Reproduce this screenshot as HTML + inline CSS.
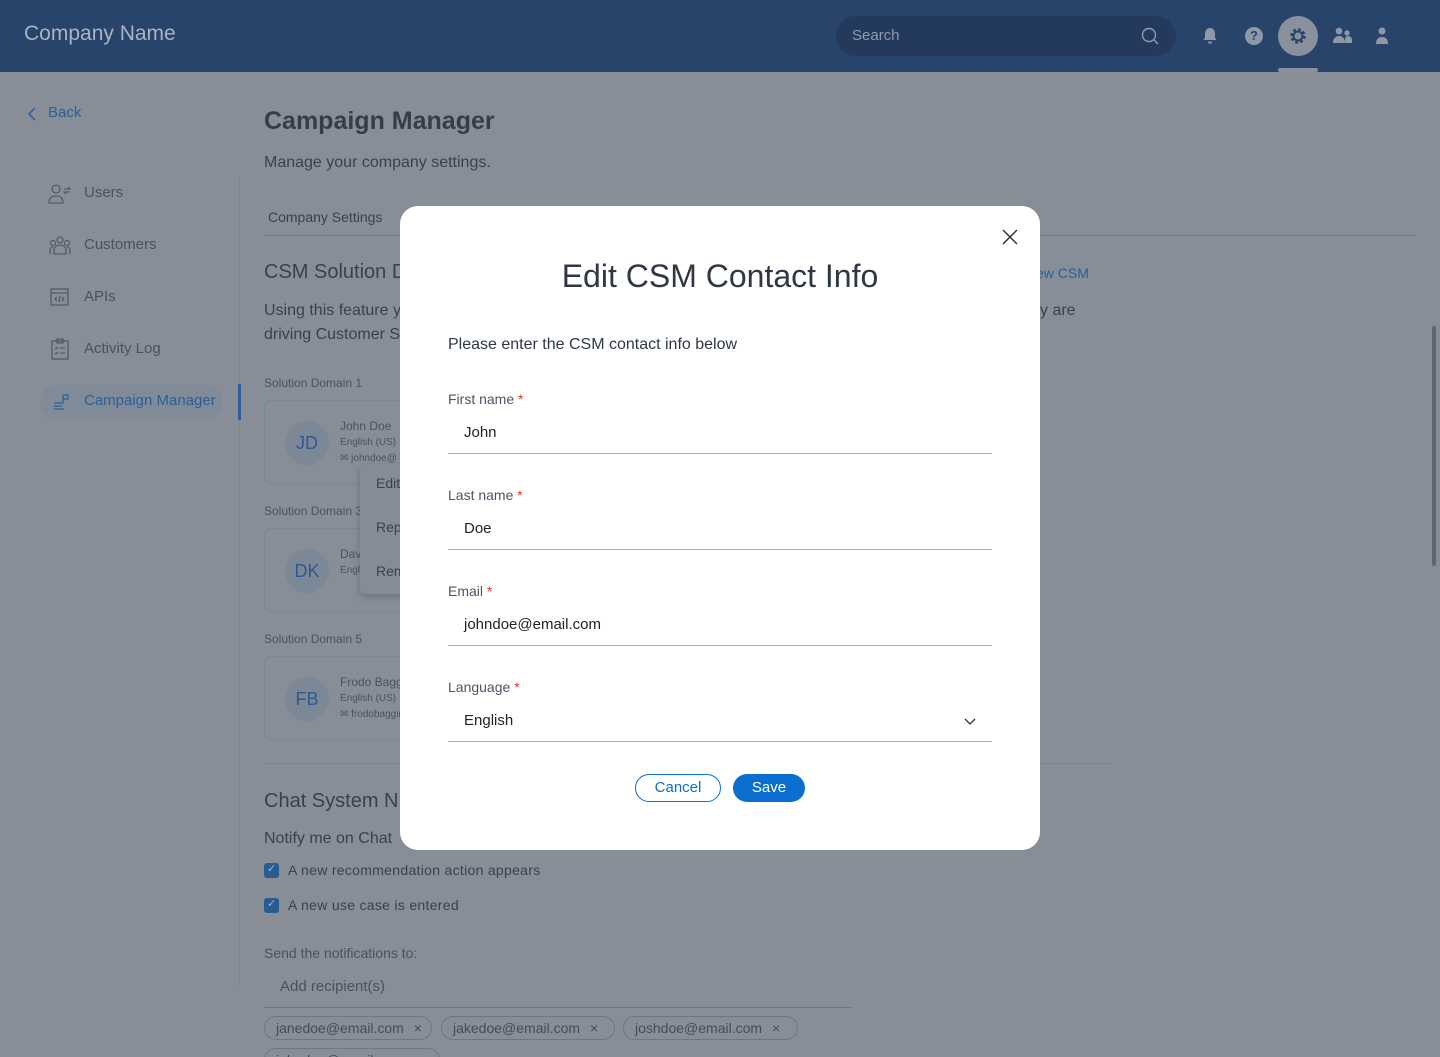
<!DOCTYPE html>
<html style="width:1440px;height:1057px;overflow:hidden"><head><meta charset="utf-8"><style>
*{margin:0;padding:0;box-sizing:border-box}
html,body{overflow:hidden}
body{width:1440px;height:1057px;overflow:hidden;background:#878e98;font-family:"Liberation Sans",Arial,sans-serif;position:relative;color:#3a4250}
.a{position:absolute;white-space:nowrap}
.hdr{position:absolute;left:0;top:0;width:1440px;height:72px;background:#28446b}
.t{color:#394150}
.mt{color:#4a5260}
.bl{color:#2a5f9a}
.card{position:absolute;left:264px;width:170px;height:84px;border:1px solid #7f8691;border-radius:6px}
.av{position:absolute;left:20px;top:20px;width:44px;height:44px;border-radius:50%;background:#7d8897;color:#2c5a90;font-size:18px;text-align:center;line-height:44px}
.chip{position:absolute;top:1016px;height:24px;border:1px solid #6f7682;border-radius:12px;font-size:14px;color:#444c58;line-height:22px;padding:0 6px 0 11px}
.chip span{display:inline-block;margin-left:10px}
.cb{position:absolute;left:264px;width:15px;height:15px;border-radius:3px;background:#2a5c92}
.modal{position:absolute;left:400px;top:206px;width:640px;height:644px;background:#fff;border-radius:18px}
.lbl{position:absolute;left:48px;font-size:14px;color:#4c5666}
.lbl b{color:#d33;font-weight:normal}
.val{position:absolute;left:64px;font-size:15px;color:#222}
.ln{position:absolute;left:48px;width:544px;height:1px;background:#a9adb3}
</style></head><body>
<div class="hdr"></div>
<div class="a" style="left:24px;top:22px;font-size:21px;color:#a9b3c3">Company Name</div>
<div class="a" style="left:836px;top:16px;width:340px;height:40px;border-radius:20px;background:#243a5c"></div>
<div class="a" style="left:852px;top:27px;font-size:15px;color:#8f9bae">Search</div>
<svg class="a" style="left:1140px;top:26px" width="20" height="20" viewBox="0 0 20 20"><circle cx="9" cy="9" r="6.5" fill="none" stroke="#8f9bae" stroke-width="1.4"/><path d="M14 14l4 4" stroke="#8f9bae" stroke-width="1.4"/></svg>
<svg class="a" style="left:1200px;top:26px" width="20" height="20" viewBox="0 0 20 20"><path d="M10 2c-3 0-5 2.5-5 5.5v4l-1.5 2.5h13l-1.5-2.5v-4C15 4.5 13 2 10 2z" fill="#8f98a6"/><rect x="8" y="15.5" width="4" height="2" rx="1" fill="#8f98a6"/></svg>
<div class="a" style="left:1245px;top:27px;width:18px;height:18px;border-radius:50%;background:#8f98a6;color:#28446b;font-size:13px;font-weight:bold;text-align:center;line-height:18px">?</div>
<div class="a" style="left:1278px;top:16px;width:40px;height:40px;border-radius:50%;background:#8a919c"></div>
<svg class="a" style="left:1288px;top:26px" width="20" height="20" viewBox="0 0 20 20"><circle cx="10" cy="10" r="6" fill="none" stroke="#28446b" stroke-width="3.5" stroke-dasharray="2.6 2.1"/><circle cx="10" cy="10" r="4.5" fill="none" stroke="#28446b" stroke-width="2"/></svg>
<div class="a" style="left:1278px;top:68px;width:40px;height:4px;background:#8a919c;border-radius:2px"></div>
<svg class="a" style="left:1332px;top:26px" width="22" height="20" viewBox="0 0 22 20"><circle cx="7" cy="5" r="3.3" fill="#8f98a6"/><path d="M1 17c0-5 3-7 6-7s6 2 6 7z" fill="#8f98a6"/><circle cx="15" cy="7" r="2.6" fill="#8f98a6"/><path d="M13 17v-4c0-2 1.5-3 3-3s4 1 4 4v3z" fill="#8f98a6"/></svg>
<svg class="a" style="left:1374px;top:26px" width="16" height="20" viewBox="0 0 16 20"><circle cx="8" cy="5" r="3.5" fill="#8f98a6"/><path d="M2 18c0-5 2.5-7 6-7s6 2 6 7z" fill="#8f98a6"/></svg>

<svg class="a" style="left:26px;top:106px" width="12" height="16" viewBox="0 0 12 16"><path d="M9 2L3 8l6 6" fill="none" stroke="#2a5f9a" stroke-width="1.5"/></svg>
<div class="a bl" style="left:48px;top:104px;font-size:15px">Back</div>
<div class="a" style="left:239px;top:177px;width:1px;height:808px;background:#7d8490"></div>
<svg class="a" style="left:48px;top:183px" width="24" height="22" viewBox="0 0 24 22" fill="none" stroke="#4a5260" stroke-width="1.1"><circle cx="8" cy="6" r="4"/><path d="M1 20c0-5 3-7 7-7s7 2 7 7z"/><path d="M16 6h6l-2-2M22 9h-6l2 2"/></svg>
<div class="a mt" style="left:84px;top:184px;font-size:15px">Users</div>
<svg class="a" style="left:48px;top:235px" width="24" height="22" viewBox="0 0 24 22" fill="none" stroke="#4a5260" stroke-width="1.1"><circle cx="12" cy="5" r="3"/><circle cx="5" cy="8" r="2.5"/><circle cx="19" cy="8" r="2.5"/><path d="M2 19v-4c0-2 2-3 3-3M22 19v-4c0-2-2-3-3-3M6 19v-4c0-3 3-5 6-5s6 2 6 5v4z"/></svg>
<div class="a mt" style="left:84px;top:236px;font-size:15px">Customers</div>
<svg class="a" style="left:50px;top:288px" width="20" height="18" viewBox="0 0 20 18" fill="none" stroke="#4a5260" stroke-width="1.1"><rect x="1" y="1" width="17" height="16"/><path d="M1 5h17M7 9l-2 2 2 2M12 9l2 2-2 2M10 8l-1 6"/></svg>
<div class="a mt" style="left:84px;top:288px;font-size:15px">APIs</div>
<svg class="a" style="left:51px;top:338px" width="18" height="22" viewBox="0 0 18 22" fill="none" stroke="#4a5260" stroke-width="1.1"><rect x="1" y="3" width="16" height="18"/><rect x="6" y="1" width="6" height="4"/><path d="M4 10l1 1 2-2M9 10h5M4 15l1 1 2-2M9 15h5"/></svg>
<div class="a mt" style="left:84px;top:340px;font-size:15px">Activity Log</div>
<div class="a" style="left:40px;top:384px;width:183px;height:36px;border-radius:18px;background:#818a97"></div>
<svg class="a" style="left:52px;top:393px" width="18" height="18" viewBox="0 0 18 18" fill="none" stroke="#2a5f9a" stroke-width="1.2"><path d="M11 2v9M11 2h5v4h-5"/><path d="M2 10h8M2 13h8M2 16h10"/></svg>
<div class="a bl" style="left:84px;top:392px;font-size:15px">Campaign Manager</div>
<div class="a" style="left:238px;top:384px;width:3px;height:36px;background:#2a5f9a"></div>

<div class="a" style="left:264px;top:107px;font-size:25px;font-weight:bold;color:#353d4a">Campaign Manager</div>
<div class="a t" style="left:264px;top:154px;font-size:16px">Manage your company settings.</div>
<div class="a t" style="left:268px;top:209px;font-size:14px">Company Settings</div>
<div class="a" style="left:264px;top:235px;width:1152px;height:1px;background:#6f7682"></div>
<div class="a t" style="left:264px;top:261px;font-size:20px">CSM Solution D</div>
<div class="a bl" style="left:1036px;top:265px;font-size:14px">ew CSM</div>
<div class="a t" style="left:264px;top:302px;font-size:16px">Using this feature y</div>
<div class="a t" style="left:1040px;top:302px;font-size:16px">y are</div>
<div class="a t" style="left:264px;top:326px;font-size:16px">driving Customer S</div>
<div class="a mt" style="left:264px;top:376px;font-size:12px">Solution Domain 1</div>
<div class="card" style="top:400px"><div class="av">JD</div><div class="a mt" style="left:75px;top:18px;font-size:12px">John Doe</div><div class="a mt" style="left:75px;top:36px;font-size:10px">English (US)</div><div class="a mt" style="left:75px;top:52px;font-size:10px">✉ johndoe@</div></div>
<div class="a mt" style="left:264px;top:504px;font-size:12px">Solution Domain 3</div>
<div class="card" style="top:528px"><div class="av">DK</div><div class="a mt" style="left:75px;top:18px;font-size:12px">Dave</div><div class="a mt" style="left:75px;top:36px;font-size:10px">Engl</div></div>
<div class="a mt" style="left:264px;top:632px;font-size:12px">Solution Domain 5</div>
<div class="card" style="top:656px"><div class="av">FB</div><div class="a mt" style="left:75px;top:18px;font-size:12px">Frodo Baggins</div><div class="a mt" style="left:75px;top:36px;font-size:10px">English (US)</div><div class="a mt" style="left:75px;top:52px;font-size:10px">✉ frodobaggins</div></div>
<div class="a" style="left:360px;top:464px;width:60px;height:130px;background:#858c96;border-radius:6px;box-shadow:0 3px 8px rgba(0,0,0,.2)"></div>
<div class="a t" style="left:376px;top:475px;font-size:14px">Edit</div>
<div class="a t" style="left:376px;top:519px;font-size:14px">Rep</div>
<div class="a t" style="left:376px;top:563px;font-size:14px">Rem</div>
<div class="a" style="left:264px;top:763px;width:848px;height:1px;background:#7d8490"></div>
<div class="a t" style="left:264px;top:790px;font-size:20px">Chat System N</div>
<div class="a t" style="left:264px;top:830px;font-size:16px">Notify me on Chat</div>
<div class="cb" style="top:863px"></div><div class="a" style="left:267px;top:862px;color:#9fb3cc;font-size:11px">✓</div>
<div class="a t" style="left:288px;top:862px;font-size:14px;letter-spacing:0.3px">A new recommendation action appears</div>
<div class="cb" style="top:898px"></div><div class="a" style="left:267px;top:897px;color:#9fb3cc;font-size:11px">✓</div>
<div class="a t" style="left:288px;top:897px;font-size:14px;letter-spacing:0.3px">A new use case is entered</div>
<div class="a mt" style="left:264px;top:945px;font-size:14px">Send the notifications to:</div>
<div class="a mt" style="left:280px;top:978px;font-size:15px">Add recipient(s)</div>
<div class="a" style="left:264px;top:1007px;width:588px;height:1px;background:#6f7682"></div>
<div class="chip" style="left:264px;width:168px">janedoe@email.com<span>×</span></div>
<div class="chip" style="left:441px;width:174px">jakedoe@email.com<span>×</span></div>
<div class="chip" style="left:623px;width:175px">joshdoe@email.com<span>×</span></div>
<div class="chip" style="left:264px;top:1048px;width:176px">johndoe@email.com<span>×</span></div>
<div class="a" style="left:1432px;top:326px;width:4px;height:240px;border-radius:2px;background:#5f6670"></div>

<div class="modal">
<svg class="a" style="left:601px;top:22px" width="18" height="18" viewBox="0 0 18 18"><path d="M2 2l14 14M16 2L2 16" stroke="#333" stroke-width="1.5"/></svg>
<div class="a" style="left:0;width:640px;text-align:center;top:52px;font-size:32px;color:#2f3744">Edit CSM Contact Info</div>
<div class="a" style="left:48px;top:130px;font-size:16px;color:#2f3744">Please enter the CSM contact info below</div>
<div class="lbl" style="top:185px">First name <b>*</b></div>
<div class="val" style="top:218px">John</div><div class="ln" style="top:247px"></div>
<div class="lbl" style="top:281px">Last name <b>*</b></div>
<div class="val" style="top:314px">Doe</div><div class="ln" style="top:343px"></div>
<div class="lbl" style="top:377px">Email <b>*</b></div>
<div class="val" style="top:410px">johndoe@email.com</div><div class="ln" style="top:439px"></div>
<div class="lbl" style="top:473px">Language <b>*</b></div>
<div class="val" style="top:506px">English</div><div class="ln" style="top:535px"></div>
<svg class="a" style="left:563px;top:511px" width="14" height="10" viewBox="0 0 14 10"><path d="M2 2l5 5 5-5" fill="none" stroke="#333" stroke-width="1.3"/></svg>
<div class="a" style="left:235px;top:568px;width:86px;height:28px;border:1px solid #0a6fce;border-radius:14px;color:#0a6fce;font-size:15px;text-align:center;line-height:26px">Cancel</div>
<div class="a" style="left:333px;top:568px;width:72px;height:28px;background:#0a6fce;border-radius:14px;color:#fff;font-size:15px;text-align:center;line-height:28px">Save</div>
</div>
</body></html>
